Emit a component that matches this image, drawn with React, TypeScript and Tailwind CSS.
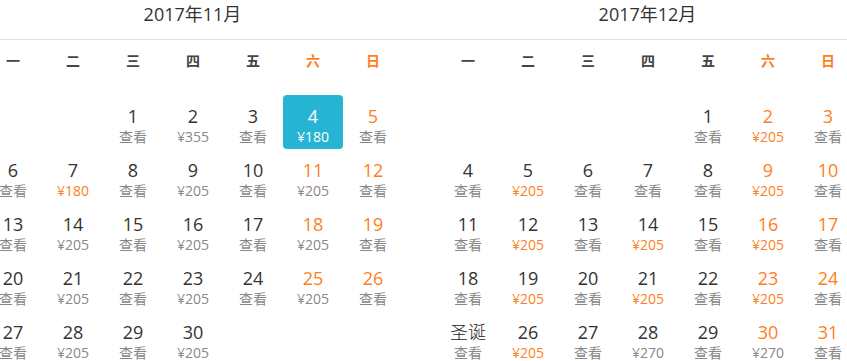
type Day = { n?: string; sub?: string; hot?: boolean; sel?: boolean; fest?: boolean };

const LOOK = '查看';

function d(n: number | string, sub: string = LOOK, hot = false): Day {
  return { n: String(n), sub, hot };
}

const novDays: Day[] = [
  {}, {}, d(1), d(2, '¥355'), d(3), { n: '4', sub: '¥180', sel: true }, d(5),
  d(6), d(7, '¥180', true), d(8), d(9, '¥205'), d(10), d(11, '¥205'), d(12),
  d(13), d(14, '¥205'), d(15), d(16, '¥205'), d(17), d(18, '¥205'), d(19),
  d(20), d(21, '¥205'), d(22), d(23, '¥205'), d(24), d(25, '¥205'), d(26),
  d(27), d(28, '¥205'), d(29), d(30, '¥205'),
];

const decDays: Day[] = [
  {}, {}, {}, {}, d(1), d(2, '¥205', true), d(3),
  d(4), d(5, '¥205', true), d(6), d(7), d(8), d(9, '¥205', true), d(10),
  d(11), d(12, '¥205', true), d(13), d(14, '¥205', true), d(15), d(16, '¥205', true), d(17),
  d(18), d(19, '¥205', true), d(20), d(21, '¥205', true), d(22), d(23, '¥205', true), d(24),
  { n: '圣诞', sub: LOOK, fest: true }, d(26, '¥205', true), d(27), d(28, '¥270'), d(29), d(30, '¥270'), d(31),
];

const weekdays = ['一', '二', '三', '四', '五', '六', '日'];

function Cell({ day, col }: { day: Day; col: number }) {
  if (!day.n) return <div className="h-[54px]" />;
  const weekend = col >= 5;
  if (day.sel) {
    return (
      <div className="h-[54px] flex flex-col items-center pt-[9px] rounded-[4px] bg-[#27b4d3] text-white">
        <span className="text-[18px] leading-[24px]">{day.n}</span>
        <span className="text-[14px] leading-[18px]">{day.sub}</span>
      </div>
    );
  }
  return (
    <div className="h-[54px] flex flex-col items-center pt-[9px]">
      <span
        className={
          'text-[18px] leading-[24px] ' +
          (day.fest ? 'font-light text-[#222222]' : weekend ? 'text-[#ff7e1c]' : 'text-[#333333]')
        }
      >
        {day.n}
      </span>
      <span className={'text-[14px] leading-[18px] ' + (day.hot ? 'text-[#ff7e1c]' : 'text-[#888888]')}>
        {day.sub}
      </span>
    </div>
  );
}

function Month({ title, days }: { title: string; days: Day[] }) {
  return (
    <div className="w-[455px] shrink-0">
      <div className="h-[40px] border-b border-[#e3e3e3] text-center text-[18px] leading-[28px] text-[#333333]">
        {title}
      </div>
      <div className="pl-[18px]">
        <div className="grid grid-cols-7 w-[420px] h-[40px] items-center">
          {weekdays.map((w, i) => (
            <div
              key={w}
              className={
                'text-center text-[14px] font-bold ' + (i >= 5 ? 'text-[#ff7e1c]' : 'text-[#444444]')
              }
            >
              {w}
            </div>
          ))}
        </div>
        <div className="grid grid-cols-7 w-[420px] mt-[15px]">
          {days.map((day, i) => (
            <Cell key={i} day={day} col={i % 7} />
          ))}
        </div>
      </div>
    </div>
  );
}

export default function App() {
  return (
    <div
      className="w-[847px] h-[361px] overflow-hidden bg-white"
      style={{ fontFamily: '"Open Sans", "Noto Sans CJK SC", sans-serif' }}
    >
      <div className="flex ml-[-35px]">
        <Month title="2017年11月" days={novDays} />
        <Month title="2017年12月" days={decDays} />
      </div>
    </div>
  );
}
